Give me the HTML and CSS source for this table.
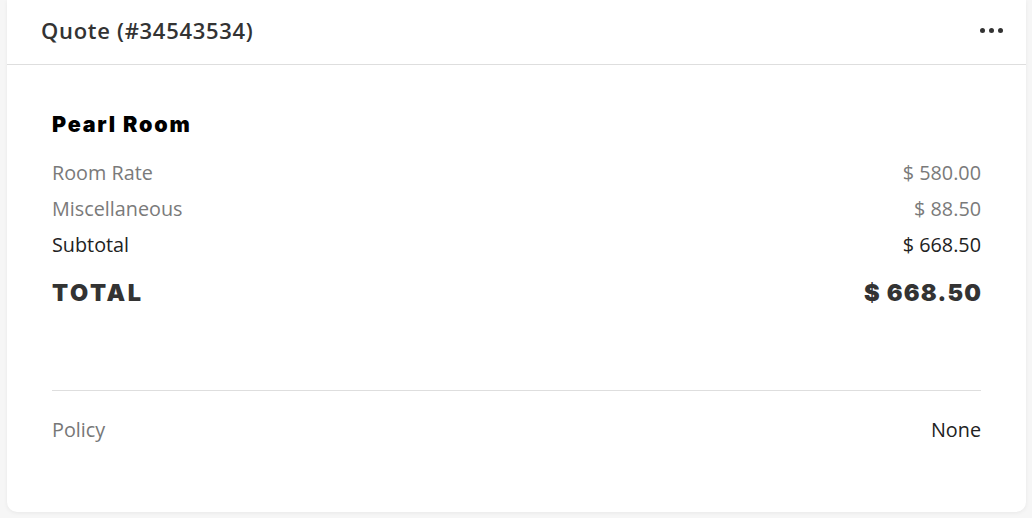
FILE: index.html
```html
<!DOCTYPE html>
<html>
<head>
<meta charset="utf-8">
<link rel="stylesheet" href="styles.css">
</head>
<body>
<div class="card">
  <div class="card-header">
    <div class="title">Quote (#34543534)</div>
    <div class="more"><span></span><span></span><span></span></div>
  </div>
  <div class="card-body">
    <div class="room">Pearl Room</div>
    <div class="row muted"><span>Room Rate</span><span>$ 580.00</span></div>
    <div class="row muted"><span>Miscellaneous</span><span>$ 88.50</span></div>
    <div class="row"><span>Subtotal</span><span>$ 668.50</span></div>
    <div class="row total"><span class="total-label">TOTAL</span><span class="total-value">$ 668.50</span></div>
    <div class="divider"></div>
    <div class="row policy"><span class="label">Policy</span><span>None</span></div>
  </div>
</div>
</body>
</html>
```

FILE: styles.css
```css
html, body {
  margin: 0;
  padding: 0;
}
body {
  background: #f6f6f6;
  font-family: "Open Sans", "Liberation Sans", sans-serif;
  color: #222;
  width: 1032px;
  height: 518px;
  overflow: hidden;
}
.card {
  margin: 0 6px 0 7px;
  height: 512px;
  background: #fff;
  border-radius: 0 0 10px 10px;
  box-shadow: 0 1px 4px rgba(0,0,0,0.06);
  box-sizing: border-box;
}
.card-header {
  height: 65px;
  box-sizing: border-box;
  border-bottom: 1px solid #dedede;
  display: flex;
  align-items: center;
  justify-content: space-between;
  padding: 0 23px 4px 34px;
}
.title {
  font-size: 22px;
  font-weight: 600;
  color: #333;
  letter-spacing: 0.7px;
}
.more {
  display: flex;
  gap: 4px;
}
.more span {
  width: 5px;
  height: 5px;
  border-radius: 50%;
  background: #333;
}
.card-body {
  padding: 44px 45px 0 45px;
}
.room {
  font-family: Inter, "DejaVu Sans", sans-serif;
  font-weight: 900;
  font-size: 21.5px;
  letter-spacing: 1.8px;
  color: #000;
  line-height: 30px;
  margin-bottom: 16px;
}
.row {
  display: flex;
  justify-content: space-between;
  font-size: 19.8px;
  line-height: 36px;
  color: #222;
}
.row.muted {
  color: #7a7a7a;
}
.row.total {
  font-family: Inter, "DejaVu Sans", sans-serif;
  font-weight: 900;
  font-size: 23.5px;
  color: #333;
  line-height: 40px;
  margin-top: 10px;
}
.total-label {
  letter-spacing: 2.6px;
}
.total-value {
  letter-spacing: 1.2px;
  margin-right: -1.2px;
}
.divider {
  height: 1px;
  background: #dedede;
  margin-top: 77px;
}
.row.policy {
  margin-top: 21px;
}
.row.policy .label {
  color: #777;
}
```
